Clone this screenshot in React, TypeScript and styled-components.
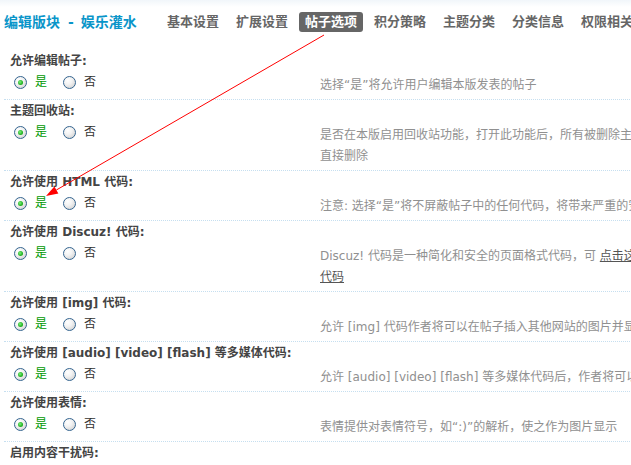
import React from "react";
import styled, { createGlobalStyle } from "styled-components";

const GlobalStyle = createGlobalStyle`
  html, body {
    margin: 0;
    padding: 0;
    background: #fff;
    overflow: hidden;
  }
  body {
    font-family: "DejaVu Sans", "Noto Sans CJK SC", sans-serif;
    font-size: 12px;
    color: #333;
  }
`;

const Page = styled.div`
  position: relative;
  width: 1000px;
  min-height: 465px;
  background: linear-gradient(#f1f6fa 0px, #ffffff 7px, #ffffff 100%);
`;

const Header = styled.div`
  display: flex;
  align-items: center;
  height: 49px;
  box-sizing: border-box;
  padding: 12px 0 17px 4px;
`;

const Title = styled.h1`
  flex: 0 0 157px;
  margin: 0;
  font-size: 14px;
  font-weight: bold;
  color: #0995c9;
  line-height: 20px;
  white-space: nowrap;
`;

const Dash = styled.span`
  margin: 0 7px 0 8px;
`;

const Tabs = styled.ul`
  display: flex;
  margin: 0;
  padding: 0;
  list-style: none;
`;

const Tab = styled.li<{ $active?: boolean }>`
  height: 20px;
  line-height: 20px;
  padding: 0 6px;
  margin-right: 5px;
  border-radius: 3px;
  font-size: 13px;
  font-weight: bold;
  white-space: nowrap;
  color: ${(p) => (p.$active ? "#fff" : "#666")};
  background: ${(p) => (p.$active ? "#666" : "transparent")};
`;

const List = styled.div`
  margin-left: 4px;
`;

const Setting = styled.div<{ $first?: boolean }>`
  border-top: 1px dotted ${(p) => (p.$first ? "transparent" : "#c6dff0")};
`;

const Label = styled.div`
  height: 22px;
  line-height: 22px;
  padding-left: 6px;
  font-weight: bold;
  color: #444;
  white-space: nowrap;
`;

const OptionRow = styled.div`
  display: flex;
  align-items: flex-start;
`;

const Radios = styled.div`
  flex: 0 0 316px;
  display: flex;
  align-items: center;
  height: 20px;
  padding-left: 10px;
  box-sizing: border-box;
`;

const Choice = styled.label<{ $yes?: boolean }>`
  display: flex;
  align-items: center;
  gap: 8px;
  margin-right: 16px;
  color: ${(p) => (p.$yes ? "#009900" : "#333")};
  line-height: 20px;
`;

const Radio = styled.span<{ $checked?: boolean }>`
  position: relative;
  display: inline-block;
  width: 13px;
  height: 13px;
  box-sizing: border-box;
  border-radius: 50%;
  border: 1px solid #34648f;
  background: radial-gradient(circle at 35% 30%, #ffffff 0%, #f2f2f2 40%, #c9c9c9 100%);
  &::after {
    content: "";
    display: ${(p) => (p.$checked ? "block" : "none")};
    position: absolute;
    left: 50%;
    top: 50%;
    width: 5px;
    height: 5px;
    margin: -2.5px 0 0 -2.5px;
    border-radius: 50%;
    background: radial-gradient(circle at 40% 40%, #7ef07e 0%, #22b322 60%, #148a14 100%);
  }
`;

const Desc = styled.div`
  padding: 3px 0 3px 0;
  line-height: 21px;
  color: #909090;
  white-space: nowrap;
`;

const DescLink = styled.a`
  color: #555;
  text-decoration: underline;
`;

const Overlay = styled.svg`
  position: absolute;
  left: 0;
  top: 0;
  pointer-events: none;
`;

type Item = { label: React.ReactNode; desc: React.ReactNode };

const items: Item[] = [
  { label: "允许编辑帖子:", desc: "选择“是”将允许用户编辑本版发表的帖子" },
  {
    label: "主题回收站:",
    desc: (
      <>
        是否在本版启用回收站功能，打开此功能后，所有被删除主题将被移动到回收站中，而不是被
        <br />
        直接删除
      </>
    ),
  },
  {
    label: "允许使用 HTML 代码:",
    desc: "注意: 选择“是”将不屏蔽帖子中的任何代码，将带来严重的安全隐患，请慎用",
  },
  {
    label: "允许使用 Discuz! 代码:",
    desc: (
      <>
        Discuz! 代码是一种简化和安全的页面格式代码，可{" "}
        <DescLink href="#">
          点击这里查看本论坛提供的 Discuz!
          <br />
          代码
        </DescLink>
      </>
    ),
  },
  {
    label: "允许使用 [img] 代码:",
    desc: "允许 [img] 代码作者将可以在帖子插入其他网站的图片并显示",
  },
  {
    label: "允许使用 [audio] [video] [flash] 等多媒体代码:",
    desc: "允许 [audio] [video] [flash] 等多媒体代码后，作者将可以在帖子中直接插入多媒体文件",
  },
  {
    label: "允许使用表情:",
    desc: "表情提供对表情符号，如“:)”的解析，使之作为图片显示",
  },
  {
    label: "启用内容干扰码:",
    desc: "选择“是”将在帖子内容中增加随机的干扰字符串，使得访问者无法复制原始内容",
  },
];

const tabs = ["基本设置", "扩展设置", "帖子选项", "积分策略", "主题分类", "分类信息", "权限相关"];

// arrow geometry
const start = { x: 324, y: 35 };
const tip = { x: 46, y: 196 };
const dx = tip.x - start.x;
const dy = tip.y - start.y;
const len = Math.hypot(dx, dy);
const ux = dx / len;
const uy = dy / len;
const headLen = 12;
const headHalf = 4;
const bx = tip.x - ux * headLen;
const by = tip.y - uy * headLen;
const p1 = `${bx + -uy * headHalf},${by + ux * headHalf}`;
const p2 = `${bx - -uy * headHalf},${by - ux * headHalf}`;

export default function App() {
  return (
    <>
      <GlobalStyle />
      <Page>
        <Header>
          <Title>
            编辑版块<Dash>-</Dash>娱乐灌水
          </Title>
          <Tabs>
            {tabs.map((t) => (
              <Tab key={t} $active={t === "帖子选项"}>
                {t}
              </Tab>
            ))}
          </Tabs>
        </Header>
        <List>
          {items.map((it, i) => (
            <Setting key={i} $first={i === 0}>
              <Label>{it.label}</Label>
              <OptionRow>
                <Radios>
                  <Choice $yes>
                    <Radio $checked />
                    是
                  </Choice>
                  <Choice>
                    <Radio />
                    否
                  </Choice>
                </Radios>
                <Desc>{it.desc}</Desc>
              </OptionRow>
            </Setting>
          ))}
        </List>
        <Overlay width="631" height="465" viewBox="0 0 631 465">
          <line x1={start.x} y1={start.y} x2={bx} y2={by} stroke="#ff0000" strokeWidth="1" />
          <polygon points={`${tip.x},${tip.y} ${p1} ${p2}`} fill="#ff0000" />
        </Overlay>
      </Page>
    </>
  );
}
